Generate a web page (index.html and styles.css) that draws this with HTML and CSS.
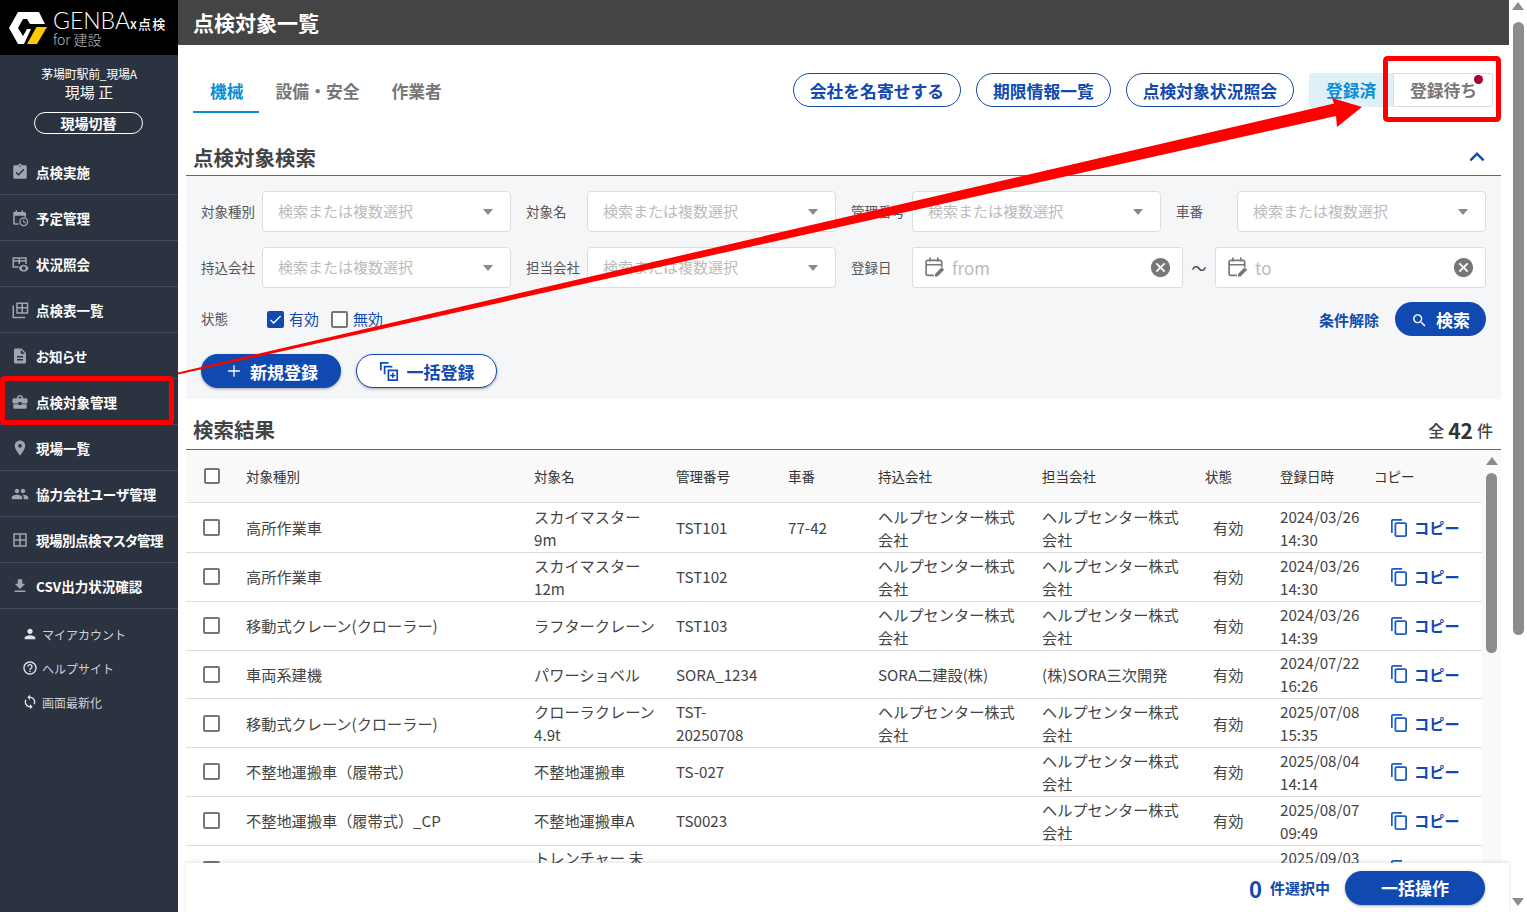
FILE: index.html
```html
<!DOCTYPE html>
<html lang="ja">
<head>
    <meta charset="UTF-8">
    <title>点検対象一覧</title>
    <link rel="stylesheet" href="styles.css">
</head>
<body>
<svg class="icon-defs" aria-hidden="true">
    <symbol id="i-check-clip" viewBox="0 0 24 24"><path d="M19 3h-4.18C14.4 1.84 13.3 1 12 1c-1.3 0-2.4.84-2.82 2H5c-1.1 0-2 .9-2 2v14c0 1.1.9 2 2 2h14c1.1 0 2-.9 2-2V5c0-1.1-.9-2-2-2zm-7 0c.55 0 1 .45 1 1s-.45 1-1 1-1-.45-1-1 .45-1 1-1zm-2 14l-4-4 1.41-1.41L10 14.17l6.59-6.59L18 9l-8 8z"/></symbol>
    <symbol id="i-plan" viewBox="0 0 24 24"><path d="M3 4h15c1 0 2 1 2 2v5h-2V9H5v10h5v2H5c-1.5 0-2-1-2-2V4zM6 1.5h2V6H6zM14 1.5h2V6h-2z"/><path fill-rule="evenodd" d="M17 11a6 6 0 1 0 0 12 6 6 0 0 0 0-12zm0 1.8a4.2 4.2 0 1 1 0 8.4 4.2 4.2 0 0 1 0-8.4zM16.2 14v3.6l3 1.6.7-1.2-2.3-1.2V14z"/></symbol>
    <symbol id="i-table-eye" viewBox="0 0 24 24"><path d="M2 3h19v9h-2V9h-7v3h-2V9H4v6h6v2H2V3zm2 2v2h6V5H4zm8 0v2h7V5h-7z"/><path fill-rule="evenodd" d="M17 13c-3 0-5.5 1.7-6.5 4.5 1 2.8 3.5 4.5 6.5 4.5s5.5-1.7 6.5-4.5C22.5 14.7 20 13 17 13zm0 2a2.5 2.5 0 1 1 0 5 2.5 2.5 0 0 1 0-5z"/></symbol>
    <symbol id="i-tables" viewBox="0 0 24 24"><path d="M7 2h16v15H7V2zm2 2v4h5V4H9zm7 0v4h5V4h-5zm-7 6v5h5v-5H9zm7 0v5h5v-5h-5z"/><path d="M2 6h2v15h15v2H2V6z"/></symbol>
    <symbol id="i-doc" viewBox="0 0 24 24"><path d="M14 2H6c-1.1 0-1.99.9-1.99 2L4 20c0 1.1.89 2 1.99 2H18c1.1 0 2-.9 2-2V8l-6-6zm2 16H8v-2h8v2zm0-4H8v-2h8v2zm-3-5V3.5L18.5 9H13z"/></symbol>
    <symbol id="i-case" viewBox="0 0 24 24"><path d="M10 16v-1H3.01L3 19c0 1.11.89 2 2 2h14c1.11 0 2-.89 2-2v-4h-7v1h-4zm10-9h-4.01V5l-2-2h-4l-2 2v2H4c-1.1 0-2 .9-2 2v3c0 1.11.89 2 2 2h6v-2h4v2h6c1.1 0 2-.9 2-2V9c0-1.1-.9-2-2-2zm-6 0h-4V5h4v2z"/></symbol>
    <symbol id="i-place" viewBox="0 0 24 24"><path d="M12 2C8.13 2 5 5.13 5 9c0 5.25 7 13 7 13s7-7.75 7-13c0-3.87-3.13-7-7-7zm0 9.5c-1.38 0-2.5-1.12-2.5-2.5s1.12-2.5 2.5-2.5 2.5 1.12 2.5 2.5-1.12 2.5-2.5 2.5z"/></symbol>
    <symbol id="i-people" viewBox="0 0 24 24"><path d="M16 11c1.66 0 2.99-1.34 2.99-3S17.66 5 16 5c-1.66 0-3 1.34-3 3s1.34 3 3 3zm-8 0c1.66 0 2.99-1.34 2.99-3S9.66 5 8 5C6.34 5 5 6.34 5 8s1.34 3 3 3zm0 2c-2.33 0-7 1.17-7 3.5V19h14v-2.5c0-2.33-4.67-3.5-7-3.5zm8 0c-.29 0-.62.02-.97.05 1.16.84 1.97 1.97 1.97 3.45V19h6v-2.5c0-2.33-4.67-3.5-7-3.5z"/></symbol>
    <symbol id="i-grid" viewBox="0 0 24 24"><path d="M3 3h18v18H3V3zm2 2v6h6V5H5zm8 0v6h6V5h-6zm-8 8v6h6v-6H5zm8 0v6h6v-6h-6z"/></symbol>
    <symbol id="i-download" viewBox="0 0 24 24"><path d="M19 9h-4V3H9v6H5l7 7 7-7zM5 18v2h14v-2H5z"/></symbol>
    <symbol id="i-person" viewBox="0 0 24 24"><path d="M12 12c2.21 0 4-1.79 4-4s-1.79-4-4-4-4 1.79-4 4 1.79 4 4 4zm0 2c-2.67 0-8 1.34-8 4v2h16v-2c0-2.66-5.33-4-8-4z"/></symbol>
    <symbol id="i-help" viewBox="0 0 24 24"><path d="M11 18h2v-2h-2v2zm1-16C6.48 2 2 6.48 2 12s4.48 10 10 10 10-4.48 10-10S17.52 2 12 2zm0 18c-4.41 0-8-3.59-8-8s3.59-8 8-8 8 3.59 8 8-3.59 8-8 8zm0-14c-2.21 0-4 1.79-4 4h2c0-1.1.9-2 2-2s2 .9 2 2c0 2-3 1.75-3 5h2c0-2.25 3-2.5 3-5 0-2.21-1.79-4-4-4z"/></symbol>
    <symbol id="i-sync" viewBox="0 0 24 24"><path d="M12 4V1L8 5l4 4V6c3.31 0 6 2.69 6 6 0 1.01-.25 1.97-.7 2.8l1.46 1.46C19.54 15.03 20 13.57 20 12c0-4.42-3.58-8-8-8zm0 14c-3.31 0-6-2.69-6-6 0-1.01.25-1.97.7-2.8L5.24 7.74C4.46 8.97 4 10.43 4 12c0 4.42 3.58 8 8 8v3l4-4-4-4v3z"/></symbol>
    <symbol id="i-copy" viewBox="0 0 18 20"><path d="M12 1H3C1.9 1 1 1.9 1 3v12h1.7V2.7H12V1zm3 3.3H6.5c-1.1 0-2 .9-2 2V17c0 1.1.9 2 2 2H15c1.1 0 2-.9 2-2V6.3c0-1.1-.9-2-2-2zm.2 13H6.3V6.1h8.900v11.2z"/></symbol>
    <symbol id="i-cancel" viewBox="0 0 24 24"><path d="M12 2C6.47 2 2 6.47 2 12s4.47 10 10 10 10-4.47 10-10S17.53 2 12 2zm5 13.59L15.59 17 12 13.41 8.41 17 7 15.59 10.59 12 7 8.41 8.41 7 12 10.59 15.59 7 17 8.41 13.41 12 17 15.59z"/></symbol>
    <symbol id="i-date" viewBox="2 1 18 18"><path fill="none" stroke="#777" stroke-width="1.5" d="M10 17.5H4.500A1.500 1.500 0 0 1 3 16V5.500A1.500 1.500 0 0 1 4.500 4h11A1.500 1.500 0 0 1 17 5.500V10M3 8h14M6.500 1.500V5M13.500 1.500V5"/><path d="M11 18.500v-2.300l6-6 2.300 2.300-6 6z"/></symbol>
</svg>

<div class="shell">
    <!-- サイドバー -->
    <aside class="sidebar">
        <div class="logo">
            <svg class="logo-mark" viewBox="0 0 38 34">
                <path fill="#fff" d="M0 17 9 1h21l6 12H21l-3-5h-4l-5 9 5 8 4-7h4l-7 15H9z"/>
                <path fill="#ffc800" d="M18 33 27.5 16H38L28 33z"/>
            </svg>
            <div class="logo-text">
                <div class="logo-name">GENBA<span class="logo-sub">x点検</span></div>
                <div class="logo-for">for 建設</div>
            </div>
        </div>
        <div class="user-box">
            <div class="user-site">茅場町駅前_現場A</div>
            <div class="user-name">現場 正</div>
            <div class="site-switch">現場切替</div>
        </div>
        <nav class="nav">
            <a class="nav-item"><svg><use href="#i-check-clip"/></svg>点検実施</a>
            <a class="nav-item"><svg><use href="#i-plan"/></svg>予定管理</a>
            <a class="nav-item"><svg><use href="#i-table-eye"/></svg>状況照会</a>
            <a class="nav-item"><svg><use href="#i-tables"/></svg>点検表一覧</a>
            <a class="nav-item"><svg><use href="#i-doc"/></svg>お知らせ</a>
            <a class="nav-item"><svg><use href="#i-case"/></svg>点検対象管理</a>
            <a class="nav-item"><svg><use href="#i-place"/></svg>現場一覧</a>
            <a class="nav-item"><svg><use href="#i-people"/></svg>協力会社ユーザ管理</a>
            <a class="nav-item nav-long"><svg><use href="#i-grid"/></svg>現場別点検マスタ管理</a>
            <a class="nav-item"><svg><use href="#i-download"/></svg>CSV出力状況確認</a>
        </nav>
        <div class="sub-nav">
            <a class="sub-item"><svg><use href="#i-person"/></svg>マイアカウント</a>
            <a class="sub-item"><svg><use href="#i-help"/></svg>ヘルプサイト</a>
            <a class="sub-item"><svg><use href="#i-sync"/></svg>画面最新化</a>
        </div>
    </aside>

    <main class="main">
        <div class="topbar">点検対象一覧</div>

        <div class="tab-row">
            <div class="tabs">
                <div class="tab active">機械</div>
                <div class="tab">設備・安全</div>
                <div class="tab">作業者</div>
            </div>
            <div class="tab-actions">
                <div class="pill">会社を名寄せする</div>
                <div class="pill">期限情報一覧</div>
                <div class="pill">点検対象状況照会</div>
                <div class="toggle">
                    <div class="toggle-on">登録済</div>
                    <div class="toggle-off">登録待ち<span class="toggle-dot"></span></div>
                </div>
            </div>
        </div>

        <!-- 検索 -->
        <div class="section-head search-head">
            <span>点検対象検索</span>
            <svg class="collapse" viewBox="0 0 24 24"><path d="M12 8l-6 6 1.41 1.41L12 10.83l4.59 4.58L18 14z"/></svg>
        </div>
        <div class="search-panel">
            <div class="form-grid">
                <div class="form-item"><label>対象種別</label><div class="select">検索または複数選択</div></div>
                <div class="form-item"><label>対象名</label><div class="select">検索または複数選択</div></div>
                <div class="form-item"><label>管理番号</label><div class="select">検索または複数選択</div></div>
                <div class="form-item"><label>車番</label><div class="select">検索または複数選択</div></div>
                <div class="form-item"><label>持込会社</label><div class="select">検索または複数選択</div></div>
                <div class="form-item"><label>担当会社</label><div class="select">検索または複数選択</div></div>
                <div class="form-item date-item">
                    <label>登録日</label>
                    <div class="date-field"><svg class="date-icon"><use href="#i-date"/></svg><span>from</span><svg class="clear-icon"><use href="#i-cancel"/></svg></div>
                    <span class="tilde">～</span>
                    <div class="date-field"><svg class="date-icon"><use href="#i-date"/></svg><span>to</span><svg class="clear-icon"><use href="#i-cancel"/></svg></div>
                </div>
            </div>
            <div class="status-row">
                <label class="status-label">状態</label>
                <span class="check checked"><svg viewBox="0 0 24 24"><path d="M9 16.17L4.83 12l-1.42 1.41L9 19 21 7l-1.41-1.41z"/></svg></span>
                <span class="check-text">有効</span>
                <span class="check"></span>
                <span class="check-text">無効</span>
                <span class="clear-link">条件解除</span>
                <div class="btn btn-search"><svg viewBox="0 0 24 24"><path d="M15.5 14h-.79l-.28-.27C15.41 12.59 16 11.11 16 9.5 16 5.91 13.09 3 9.5 3S3 5.91 3 9.5 5.91 16 9.5 16c1.61 0 3.09-.59 4.23-1.57l.27.28v.79l5 4.99L20.49 19l-4.99-5zm-6 0C7.01 14 5 11.99 5 9.5S7.01 5 9.5 5 14 7.01 14 9.5 11.99 14 9.5 14z"/></svg>検索</div>
            </div>
            <div class="register-row">
                <div class="btn btn-new"><svg viewBox="0 0 24 24"><path d="M19 12.8h-6.2V19h-1.6v-6.2H5v-1.6h6.2V5h1.6v6.2H19z"/></svg>新規登録</div>
                <div class="btn btn-bulk"><svg viewBox="2 1 21 22"><path d="M3 2h9v1.8H4.8V11H3zM7 6h9v1.8H8.8V15H7z"/><path fill-rule="evenodd" d="M11 10h11v12H11V10zm1.8 1.8v8.4h7.400v-8.400h-7.400zM15.700 13.300h1.600v2h2v1.600h-2v2h-1.600v-2h-2v-1.600h2z"/></svg>一括登録</div>
            </div>
        </div>

        <!-- 検索結果 -->
        <div class="section-head result-head">
            <span>検索結果</span>
            <div class="total">全<b>42</b>件</div>
        </div>
        <div class="result-body">
            <div class="result-table">
                <div class="row head-row">
                    <div><span class="check head-check"></span></div>
                    <div>対象種別</div><div>対象名</div><div>管理番号</div><div>車番</div><div>持込会社</div><div>担当会社</div><div>状態</div><div>登録日時</div><div>コピー</div>
                </div>
                <div class="row">
                    <div><span class="check"></span></div>
                    <div>高所作業車</div><div>スカイマスター<br>9m</div><div>TST101</div><div>77-42</div><div>ヘルプセンター株式<br>会社</div><div>ヘルプセンター株式<br>会社</div><div class="state">有効</div><div>2024/03/26<br>14:30</div>
                    <div class="copy"><svg><use href="#i-copy"/></svg>コピー</div>
                </div>
                <div class="row">
                    <div><span class="check"></span></div>
                    <div>高所作業車</div><div>スカイマスター<br>12m</div><div>TST102</div><div></div><div>ヘルプセンター株式<br>会社</div><div>ヘルプセンター株式<br>会社</div><div class="state">有効</div><div>2024/03/26<br>14:30</div>
                    <div class="copy"><svg><use href="#i-copy"/></svg>コピー</div>
                </div>
                <div class="row">
                    <div><span class="check"></span></div>
                    <div>移動式クレーン(クローラー)</div><div>ラフタークレーン</div><div>TST103</div><div></div><div>ヘルプセンター株式<br>会社</div><div>ヘルプセンター株式<br>会社</div><div class="state">有効</div><div>2024/03/26<br>14:39</div>
                    <div class="copy"><svg><use href="#i-copy"/></svg>コピー</div>
                </div>
                <div class="row">
                    <div><span class="check"></span></div>
                    <div>車両系建機</div><div>パワーショベル</div><div>SORA_1234</div><div></div><div>SORA二建設(株)</div><div>(株)SORA三次開発</div><div class="state">有効</div><div>2024/07/22<br>16:26</div>
                    <div class="copy"><svg><use href="#i-copy"/></svg>コピー</div>
                </div>
                <div class="row">
                    <div><span class="check"></span></div>
                    <div>移動式クレーン(クローラー)</div><div>クローラクレーン<br>4.9t</div><div>TST-<br>20250708</div><div></div><div>ヘルプセンター株式<br>会社</div><div>ヘルプセンター株式<br>会社</div><div class="state">有効</div><div>2025/07/08<br>15:35</div>
                    <div class="copy"><svg><use href="#i-copy"/></svg>コピー</div>
                </div>
                <div class="row">
                    <div><span class="check"></span></div>
                    <div>不整地運搬車（履帯式）</div><div>不整地運搬車</div><div>TS-027</div><div></div><div></div><div>ヘルプセンター株式<br>会社</div><div class="state">有効</div><div>2025/08/04<br>14:14</div>
                    <div class="copy"><svg><use href="#i-copy"/></svg>コピー</div>
                </div>
                <div class="row">
                    <div><span class="check"></span></div>
                    <div>不整地運搬車（履帯式）_CP</div><div>不整地運搬車A</div><div>TS0023</div><div></div><div></div><div>ヘルプセンター株式<br>会社</div><div class="state">有効</div><div>2025/08/07<br>09:49</div>
                    <div class="copy"><svg><use href="#i-copy"/></svg>コピー</div>
                </div>
                <div class="row">
                    <div><span class="check"></span></div>
                    <div></div><div>トレンチャー 未<br>&nbsp;</div><div></div><div></div><div></div><div></div><div class="state"></div><div>2025/09/03<br>&nbsp;</div>
                    <div class="copy"><svg><use href="#i-copy"/></svg></div>
                </div>
            </div>
            <div class="inner-scroll">
                <span class="arrow-up"></span>
                <span class="inner-thumb"></span>
            </div>
        </div>

        <div class="bulk-bar">
            <span class="bulk-count">0</span>
            <span class="bulk-text">件選択中</span>
            <div class="btn btn-bulk-action">一括操作</div>
        </div>
    </main>

    <div class="page-scroll">
        <span class="arrow-up"></span>
        <span class="page-thumb"></span>
        <span class="arrow-down"></span>
    </div>
</div>

<!-- 赤枠と矢印の注釈 -->
<svg class="annotation" viewBox="0 0 1527 912">
    <rect x="2.5" y="378.5" width="169" height="44" rx="2" fill="none" stroke="#f00" stroke-width="5"/>
    <rect x="1385.5" y="58.5" width="113" height="61" rx="2" fill="none" stroke="#f00" stroke-width="5"/>
    <polygon fill="#f00" points="178,372.5 1334,103.5 1332,98 1362,107 1337,127 1336,116 178,374.5"/>
</svg>
</body>
</html>
```

FILE: styles.css
```css
* {
    box-sizing: border-box;
}
body {
    margin: 0;
    height: 912px;
    overflow: hidden;
    background-color: white;
    color: #444;
    font-family: "Noto Sans CJK JP", "Noto Sans", sans-serif;
    font-size: 15.2px;
}
.icon-defs {
    display: none;
}
.shell {
    display: flex;
    height: 912px;
}

/* サイドバー */
.sidebar {
    flex: 0 0 178px;
    background-color: #2b3240;
    color: white;
}
.logo {
    display: flex;
    align-items: center;
    height: 55px;
    padding-left: 9px;
    background-color: black;
}
.logo-mark {
    width: 38px;
    height: 34px;
    flex: none;
}
.logo-text {
    margin-left: 6px;
}
.logo-name {
    font-family: Lato, sans-serif;
    font-weight: 300;
    font-size: 23px;
    line-height: 22px;
}
.logo-sub {
    font-family: "Noto Sans CJK JP", sans-serif;
    font-weight: 500;
    font-size: 13px;
    letter-spacing: 1.2px;
}
.logo-for {
    margin-top: -3px;
    font-size: 14px;
    line-height: 14px;
    font-weight: 300;
    color: #bbb;
}
.user-box {
    height: 94px;
    padding-top: 10px;
    text-align: center;
}
.user-site {
    font-size: 12px;
    line-height: 17px;
    letter-spacing: -0.3px;
}
.user-name {
    font-size: 15px;
    line-height: 20px;
}
.site-switch {
    width: 109px;
    height: 22px;
    margin: 10px auto 0 34px;
    border: 1px solid white;
    border-radius: 11px;
    font-size: 14px;
    font-weight: 700;
    line-height: 20px;
}
.nav-item {
    display: flex;
    align-items: center;
    gap: 7px;
    height: 46px;
    padding-left: 11px;
    border-bottom: 1px solid #434a58;
    font-size: 13.5px;
    font-weight: 700;
    font-feature-settings: "palt";
}
.nav-item svg {
    width: 18px;
    height: 18px;
    fill: #a1a5ae;
    flex: none;
}
.nav-long {
    letter-spacing: -0.5px;
}
.sub-nav {
    padding-top: 8px;
}
.sub-item {
    display: flex;
    align-items: center;
    gap: 4px;
    height: 34px;
    padding-left: 22px;
    font-size: 12px;
    color: #d0d3d8;
}
.sub-item svg {
    width: 16px;
    height: 16px;
    fill: #e4e6e9;
    flex: none;
}

/* メイン */
.main {
    position: relative;
    flex: 1;
    min-width: 0;
    padding: 0 8px 49px;
    display: flex;
    flex-direction: column;
}
.topbar {
    height: 45px;
    margin: 0 -8px;
    padding-left: 15px;
    background-color: #444;
    color: white;
    font-size: 21px;
    font-weight: 700;
    line-height: 44px;
}
.tab-row {
    display: flex;
    justify-content: space-between;
    height: 68px;
    padding: 0 8px 0 7px;
}
.tabs {
    display: flex;
}
.tab {
    height: 68px;
    padding: 32px 15px 0 17px;
    color: #777;
    font-size: 16.8px;
    font-weight: 700;
    line-height: 28px;
}
.tab.active {
    color: #0a8ed4;
    border-bottom: 2px solid #0a8ed4;
}
.tab-actions {
    display: flex;
    align-items: flex-start;
    gap: 15px;
    padding-top: 28px;
}
.pill {
    height: 34px;
    padding: 0 16px;
    border: 1px solid #1049b0;
    border-radius: 17px;
    color: #1049b0;
    font-size: 16.8px;
    font-weight: 700;
    line-height: 35px;
}
.toggle {
    display: flex;
    height: 34px;
    font-size: 16.8px;
    font-weight: 700;
    line-height: 35px;
}
.toggle-on {
    width: 84px;
    padding-left: 17px;
    background-color: #dff0f8;
    border-radius: 3px 0 0 3px;
    color: #0a8ed4;
}
.toggle-off {
    position: relative;
    width: 100px;
    padding-left: 16px;
    border: 1px solid #ddd;
    border-radius: 0 3px 3px 0;
    color: #777;
    line-height: 33px;
}
.toggle-dot {
    position: absolute;
    top: 1px;
    right: 9px;
    width: 9px;
    height: 9px;
    border-radius: 50%;
    background-color: #a8002a;
}
.section-head {
    display: flex;
    justify-content: space-between;
    padding: 0 8px 0 7px;
    border-bottom: 1px solid #666;
    color: #444;
    font-size: 20.5px;
    font-weight: 700;
}
.search-head {
    align-items: flex-start;
    height: 63px;
    padding-top: 29px;
    line-height: 30px;
}
.collapse {
    width: 30px;
    height: 30px;
    margin-right: 1px;
    fill: #1049b0;
}
.search-panel {
    height: 223px;
    padding: 15px 15px 0;
    background-color: #f5f6f8;
}
.form-grid {
    display: grid;
    grid-template-columns: repeat(4, 310px);
    column-gap: 15px;
    row-gap: 15px;
}
.form-item {
    display: flex;
    align-items: center;
    height: 41px;
}
.form-item label {
    flex: 0 0 61px;
    margin-bottom: 1px;
    font-size: 13.5px;
    color: #555;
}
.date-item {
    grid-column: 3 / span 2;
}
.select {
    position: relative;
    flex: 1;
    height: 41px;
    padding-left: 15px;
    border: 1px solid #ddd;
    border-radius: 4px;
    background-color: white;
    color: #bbb;
    font-size: 15px;
    line-height: 37px;
}
.select::after {
    content: "";
    position: absolute;
    top: 17px;
    right: 17px;
    border-left: 5.5px solid transparent;
    border-right: 5.5px solid transparent;
    border-top: 6px solid #888;
}
.date-field {
    display: flex;
    align-items: center;
    flex: 0 0 271px;
    height: 41px;
    padding: 0 10px 0 12px;
    border: 1px solid #ddd;
    border-radius: 3px;
    background-color: white;
    color: #bbb;
    font-size: 17px;
}
.date-icon {
    width: 20px;
    height: 20px;
    margin: -2px 7px 0 0;
    fill: #777;
    flex: none;
}
.clear-icon {
    width: 23px;
    height: 23px;
    margin-left: auto;
    fill: #777;
    flex: none;
}
.tilde {
    flex: 0 0 32px;
    text-align: center;
    color: #444;
    font-size: 15px;
    white-space: nowrap;
}
.status-row {
    display: flex;
    align-items: center;
    height: 34px;
    margin-top: 14px;
}
.status-label {
    flex: 0 0 66px;
    margin-bottom: 2px;
    font-size: 13.5px;
    color: #555;
}
.check {
    display: block;
    flex: none;
    width: 17px;
    height: 17px;
    border: 2px solid #777;
    border-radius: 2px;
    background-color: white;
}
.check.checked {
    border-color: #1049b0;
    background-color: #1049b0;
}
.check.checked svg {
    display: block;
    width: 15px;
    height: 15px;
    margin: -1px;
    fill: white;
}
.check-text {
    margin: 0 12px 2px 5px;
    color: #1049b0;
    font-size: 15px;
}
.clear-link {
    margin-left: auto;
    color: #1049b0;
    font-weight: 700;
    font-size: 15px;
}
.btn {
    display: flex;
    align-items: center;
    justify-content: center;
    height: 34px;
    border-radius: 17px;
    font-size: 17px;
    font-weight: 700;
    background-color: #1049b0;
    color: white;
    box-shadow: 0 1px 3px rgba(0, 0, 0, 0.35);
}
.btn svg {
    fill: white;
    flex: none;
}
.btn-search {
    width: 91px;
    margin-left: 16px;
    gap: 8px;
    box-shadow: none;
}
.btn-search svg {
    width: 17px;
    height: 17px;
    margin-top: 2px;
}
.register-row {
    display: flex;
    gap: 15px;
    margin-top: 18px;
}
.btn-new {
    width: 140px;
    gap: 6px;
}
.btn-new svg {
    width: 20px;
    height: 20px;
}
.btn-bulk {
    width: 141px;
    gap: 8px;
    border: 1px solid #1049b0;
    background-color: white;
    color: #1049b0;
}
.btn-bulk svg {
    width: 20px;
    height: 21px;
    fill: #1049b0;
}
.result-head {
    align-items: center;
    height: 51px;
    padding-top: 9px;
}
.total {
    display: flex;
    align-items: center;
    gap: 4px;
    padding-top: 2px;
    color: #444;
    font-size: 16px;
    font-weight: 500;
}
.total b {
    color: #333;
    font-size: 21px;
}

/* 検索結果テーブル */
.result-body {
    display: flex;
    flex: 1;
    min-height: 0;
    overflow: hidden;
}
.result-table {
    flex: 0 0 1296px;
}
.row {
    display: grid;
    grid-template-columns: 60px 288px 142px 112px 90px 164px 163px 75px 94px 108px;
    align-items: center;
    height: 48.75px;
    border-bottom: 1px solid #ddd;
    line-height: 23px;
    white-space: nowrap;
}
.row > div:first-child {
    padding-left: 17px;
}
.head-row {
    height: 53px;
    background-color: #f9f9f9;
    color: #333;
    font-size: 13.5px;
}
.head-row + .row {
    height: 50px;
}
.head-check {
    width: 16px;
    height: 16px;
    margin-left: 1px;
}
.state {
    padding-left: 8px;
}
.copy {
    display: flex;
    align-items: center;
    gap: 6px;
    padding-left: 16px;
    color: #1049b0;
    font-weight: 700;
}
.copy svg {
    width: 18px;
    height: 20px;
    fill: #1a5cc8;
    flex: none;
}
.inner-scroll {
    display: flex;
    flex-direction: column;
    align-items: center;
    flex: 0 0 19px;
    padding-top: 7px;
    background-color: #f9f9f9;
    gap: 8px;
}
.inner-thumb {
    width: 11px;
    height: 180px;
    flex: none;
    border-radius: 6px;
    background-color: #8c8c8c;
}
.arrow-up {
    width: 0;
    height: 0;
    flex: none;
    border-left: 6px solid transparent;
    border-right: 6px solid transparent;
    border-bottom: 8px solid #8c8c8c;
}
.arrow-down {
    width: 0;
    height: 0;
    flex: none;
    border-left: 6px solid transparent;
    border-right: 6px solid transparent;
    border-top: 8px solid #8c8c8c;
}
.bulk-bar {
    position: absolute;
    left: 8px;
    right: 0;
    bottom: 0;
    display: flex;
    align-items: center;
    height: 49px;
    padding-right: 24px;
    justify-content: flex-end;
    background-color: white;
    box-shadow: 0 -1px 4px rgba(0, 0, 0, 0.12);
    color: #1049b0;
}
.bulk-count {
    margin-right: 8px;
    font-size: 22px;
    font-weight: 700;
}
.bulk-text {
    margin-right: 15px;
    font-weight: 700;
    font-size: 15px;
}
.btn-bulk-action {
    width: 140px;
}

/* ページのスクロールバー */
.page-scroll {
    display: flex;
    flex-direction: column;
    align-items: center;
    flex: 0 0 18px;
    padding: 2px 0 6px;
}
.page-thumb {
    width: 11px;
    height: 613px;
    margin-top: 12px;
    flex: none;
    border-radius: 6px;
    background-color: #8c8c8c;
}
.page-scroll .arrow-down {
    margin-top: auto;
}
.annotation {
    position: absolute;
    top: 0;
    left: 0;
    width: 1527px;
    height: 912px;
    pointer-events: none;
}
```
